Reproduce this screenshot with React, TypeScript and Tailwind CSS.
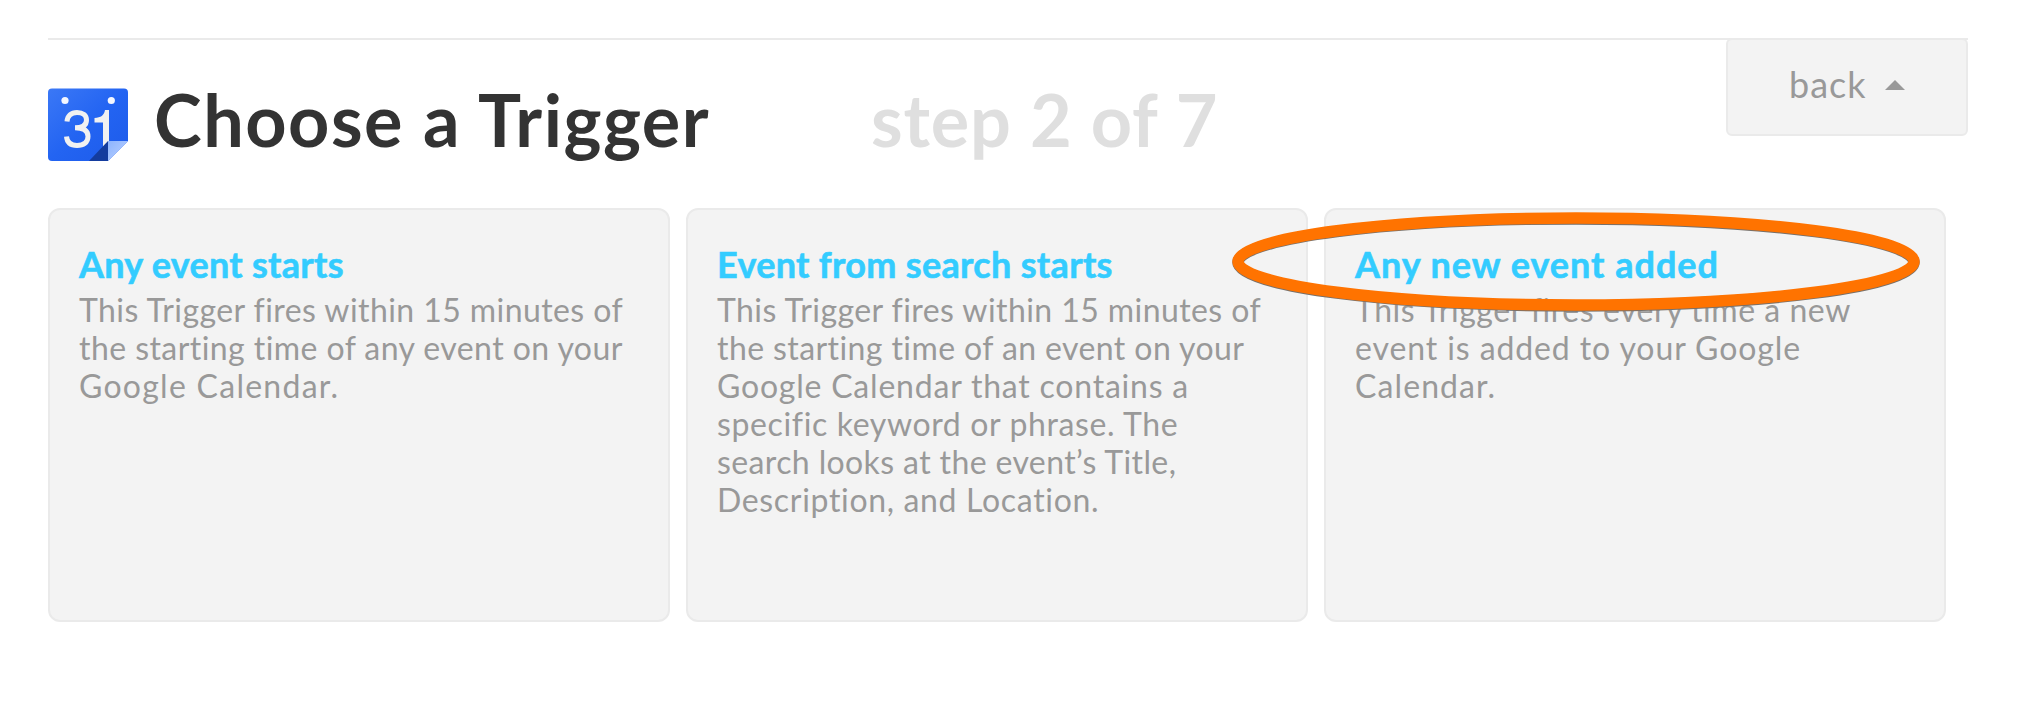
type Line = { text: string; spacing: string };
type Trigger = { title: Line; lines: Line[] };

const triggers: Trigger[] = [
  {
    title: { text: "Any event starts", spacing: "tracking-[0.28px]" },
    lines: [
      { text: "This Trigger fires within 15 minutes of", spacing: "tracking-[0.43px]" },
      { text: "the starting time of any event on your", spacing: "tracking-[0.43px]" },
      { text: "Google Calendar.", spacing: "tracking-[1.27px]" },
    ],
  },
  {
    title: { text: "Event from search starts", spacing: "tracking-[0.32px]" },
    lines: [
      { text: "This Trigger fires within 15 minutes of", spacing: "tracking-[0.43px]" },
      { text: "the starting time of an event on your", spacing: "tracking-[0.41px]" },
      { text: "Google Calendar that contains a", spacing: "tracking-[0.79px]" },
      { text: "specific keyword or phrase. The", spacing: "tracking-[0.63px]" },
      { text: "search looks at the event’s Title,", spacing: "tracking-[0.38px]" },
      { text: "Description, and Location.", spacing: "tracking-[0.67px]" },
    ],
  },
  {
    title: { text: "Any new event added", spacing: "tracking-[0.99px]" },
    lines: [
      { text: "This Trigger fires every time a new", spacing: "tracking-[0.53px]" },
      { text: "event is added to your Google", spacing: "tracking-[0.9px]" },
      { text: "Calendar.", spacing: "tracking-[1.1px]" },
    ],
  },
];

function CalendarIcon() {
  return (
    <svg className="mt-[48px] h-[74px] w-[80px] shrink-0" viewBox="0 0 80 74">
      <defs>
        <linearGradient id="cal" x1="0" y1="0" x2="1" y2="1">
          <stop offset="0" stopColor="#3b78f6" />
          <stop offset="0.5" stopColor="#2364f2" />
          <stop offset="1" stopColor="#1d5bea" />
        </linearGradient>
        <linearGradient id="fold" x1="0" y1="0" x2="0.6" y2="0.6">
          <stop offset="0" stopColor="#8db4fd" />
          <stop offset="1" stopColor="#a9c6ff" />
        </linearGradient>
      </defs>
      <path d="M4 0.5H76Q80 0.5 80 4.500V53L60 73H4Q0 73 0 69V4.500Q0 0.500 4 0.500Z" fill="url(#cal)" />
      <circle cx="17" cy="12.500" r="3.600" fill="#f4f7ff" />
      <circle cx="63.300" cy="12.500" r="3.600" fill="#f4f7ff" />
      <path
        d="M19 33.500C19.500 28 23 24.500 29 24.500C35 24.500 38.500 27.500 38.500 32C38.500 37 34.500 39.800 27 39.800C35.500 39.800 40 43 40 48.500C40 54.500 35.500 57.500 29 57.500C22.500 57.500 19 54 18.500 48.500"
        fill="none"
        stroke="#f1f1f1"
        strokeWidth="5"
      />
      <path d="M46.500 30C53 29.500 56 27.500 57 22H61V59H55V34.500H46.500Z" fill="#f1f1f1" />
      <path d="M60 53V73H41Z" fill="#143c9e" />
      <path d="M60 53H80L60 73Z" fill="url(#fold)" />
    </svg>
  );
}

function TriggerCard({ trigger }: { trigger: Trigger }) {
  return (
    <article className="h-[414px] w-[622px] rounded-[12px] border-2 border-[#eaeaea] bg-[#f3f3f3] pt-8 pl-[29px] whitespace-nowrap">
      <h2
        className={`text-[36px] leading-[44px] font-bold text-[#33ccff] [-webkit-text-stroke:0.6px_#33ccff] ${trigger.title.spacing}`}
      >
        {trigger.title.text}
      </h2>
      <p className="mt-[5px] text-[32px] leading-[38px] text-[#999999]">
        {trigger.lines.map((line) => (
          <span key={line.text} className={`block ${line.spacing}`}>
            {line.text}
          </span>
        ))}
      </p>
    </article>
  );
}

export default function App() {
  return (
    <div className="relative h-[718px] w-[2042px] overflow-hidden bg-white pt-[38px] pl-12 font-['Lato',sans-serif]">
      <header className="flex h-[170px] w-[1920px] items-start border-t-2 border-[#eaeaea]">
        <CalendarIcon />
        <h1 className="mt-[43px] ml-[26px] w-[717px] text-[72px] leading-[72px] font-bold tracking-[1.5px] whitespace-nowrap text-[#333333]">
          Choose a Trigger
        </h1>
        <div className="mt-[43px] text-[72px] leading-[72px] font-bold tracking-[0.8px] whitespace-nowrap text-[#dfdfdf]">
          step 2 of 7
        </div>
        <button className="-mt-0.5 ml-auto flex h-[98px] w-[242px] items-center rounded-[6px] border-2 border-[#eaeaea] bg-[#f3f3f3] pb-[6px] pl-[61px] text-[36px] leading-[44px] tracking-[1px] text-[#999999]">
          back
          <svg className="mt-0.5 ml-[18px] h-[10px] w-[20px]" viewBox="0 0 20 10">
            <path d="M10 0L20 10H0Z" fill="#999999" />
          </svg>
        </button>
      </header>
      <main className="flex gap-4">
        {triggers.map((trigger) => (
          <TriggerCard key={trigger.title.text} trigger={trigger} />
        ))}
      </main>
      <svg className="absolute top-[204px] left-[1224px] h-[116px] w-[704px]" viewBox="1224 204 704 116">
        <ellipse cx="1576" cy="262.400" rx="338" ry="43.500" fill="none" stroke="#77706a" strokeWidth="11.500" />
        <ellipse cx="1576" cy="261.500" rx="338" ry="43.500" fill="none" stroke="#ff7300" strokeWidth="11.500" />
      </svg>
    </div>
  );
}
